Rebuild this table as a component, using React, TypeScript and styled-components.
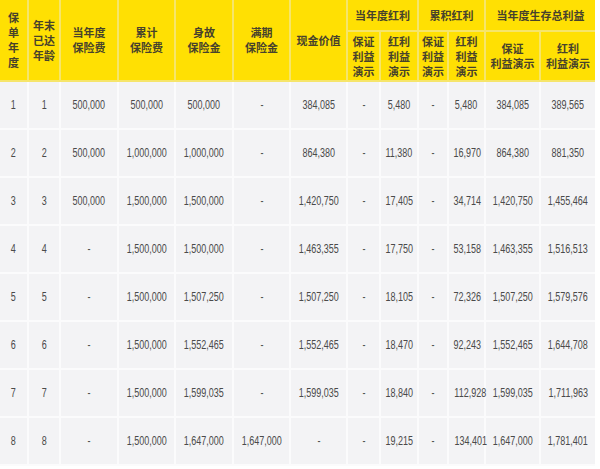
import React from 'react';
import styled, { createGlobalStyle } from 'styled-components';

const GlobalStyle = createGlobalStyle`
  html, body {
    margin: 0;
    padding: 0;
    background: #ffffff;
  }
`;

const YELLOW = '#ffe003';
const HEAD_LINE = '#f6e56a';
const BODY_BG = '#f3f3f5';
const BODY_LINE = '#fbfbfc';

const widths = [28, 32, 58, 57, 58, 57, 57, 33, 38, 30, 37, 55, 55];

type Row = string[];

const rows: Row[] = [
  ['1', '1', '500,000', '500,000', '500,000', '-', '384,085', '-', '5,480', '-', '5,480', '384,085', '389,565'],
  ['2', '2', '500,000', '1,000,000', '1,000,000', '-', '864,380', '-', '11,380', '-', '16,970', '864,380', '881,350'],
  ['3', '3', '500,000', '1,500,000', '1,500,000', '-', '1,420,750', '-', '17,405', '-', '34,714', '1,420,750', '1,455,464'],
  ['4', '4', '-', '1,500,000', '1,500,000', '-', '1,463,355', '-', '17,750', '-', '53,158', '1,463,355', '1,516,513'],
  ['5', '5', '-', '1,500,000', '1,507,250', '-', '1,507,250', '-', '18,105', '-', '72,326', '1,507,250', '1,579,576'],
  ['6', '6', '-', '1,500,000', '1,552,465', '-', '1,552,465', '-', '18,470', '-', '92,243', '1,552,465', '1,644,708'],
  ['7', '7', '-', '1,500,000', '1,599,035', '-', '1,599,035', '-', '18,840', '-', '112,928', '1,599,035', '1,711,963'],
  ['8', '8', '-', '1,500,000', '1,647,000', '1,647,000', '-', '-', '19,215', '-', '134,401', '1,647,000', '1,781,401'],
];

const Page = styled.div`
  width: 600px;
  height: 469px;
  overflow: hidden;
  background: #ffffff;
`;

const Table = styled.table`
  width: 595px;
  table-layout: fixed;
  border-collapse: collapse;
`;

const HeadCell = styled.th`
  background: ${YELLOW};
  border: 2px solid ${HEAD_LINE};
  border-top: none;
  padding: 0 1px;
  color: #47422c;
  font-family: "Noto Sans CJK SC", "Noto Sans", sans-serif;
  font-size: 11px;
  font-weight: 700;
  line-height: 15px;
  text-align: center;
  vertical-align: middle;
  &:first-child { border-left: none; }
  &:last-child { border-right: none; }
`;

const GroupRow = styled.tr`
  height: 31px;
`;

const SubRow = styled.tr`
  height: 50px;
`;

const BodyRow = styled.tr`
  height: 48px;
`;

const Cell = styled.td`
  background: ${BODY_BG};
  border: 2px solid ${BODY_LINE};
  padding: 0;
  color: #4a4a4a;
  font-family: "Liberation Sans", Arial, sans-serif;
  font-size: 12px;
  text-align: center;
  vertical-align: middle;
  white-space: nowrap;
  &:first-child { border-left: none; }
  &:last-child { border-right: none; }
`;

/* the figures in the source are set in a condensed face */
const Num = styled.span`
  display: inline-block;
  transform: scaleX(0.75);
`;

const Stack = ({ lines }: { lines: string[] }) => (
  <>
    {lines.map((l, i) => (
      <React.Fragment key={i}>
        {i > 0 && <br />}
        {l}
      </React.Fragment>
    ))}
  </>
);

export default function App() {
  return (
    <Page>
      <GlobalStyle />
      <Table>
        <colgroup>
          {widths.map((w, i) => (
            <col key={i} style={{ width: w }} />
          ))}
        </colgroup>
        <thead>
          <GroupRow>
            <HeadCell rowSpan={2}>
              <Stack lines={['保', '单', '年', '度']} />
            </HeadCell>
            <HeadCell rowSpan={2}>
              <Stack lines={['年末', '已达', '年龄']} />
            </HeadCell>
            <HeadCell rowSpan={2}>
              <Stack lines={['当年度', '保险费']} />
            </HeadCell>
            <HeadCell rowSpan={2}>
              <Stack lines={['累计', '保险费']} />
            </HeadCell>
            <HeadCell rowSpan={2}>
              <Stack lines={['身故', '保险金']} />
            </HeadCell>
            <HeadCell rowSpan={2}>
              <Stack lines={['满期', '保险金']} />
            </HeadCell>
            <HeadCell rowSpan={2}>现金价值</HeadCell>
            <HeadCell colSpan={2}>当年度红利</HeadCell>
            <HeadCell colSpan={2}>累积红利</HeadCell>
            <HeadCell colSpan={2}>当年度生存总利益</HeadCell>
          </GroupRow>
          <SubRow>
            <HeadCell><Stack lines={['保证', '利益', '演示']} /></HeadCell>
            <HeadCell><Stack lines={['红利', '利益', '演示']} /></HeadCell>
            <HeadCell><Stack lines={['保证', '利益', '演示']} /></HeadCell>
            <HeadCell><Stack lines={['红利', '利益', '演示']} /></HeadCell>
            <HeadCell><Stack lines={['保证', '利益演示']} /></HeadCell>
            <HeadCell><Stack lines={['红利', '利益演示']} /></HeadCell>
          </SubRow>
        </thead>
        <tbody>
          {rows.map((r, i) => (
            <BodyRow key={i}>
              {r.map((v, j) => (
                <Cell key={j}>
                  <Num>{v}</Num>
                </Cell>
              ))}
            </BodyRow>
          ))}
        </tbody>
      </Table>
    </Page>
  );
}
